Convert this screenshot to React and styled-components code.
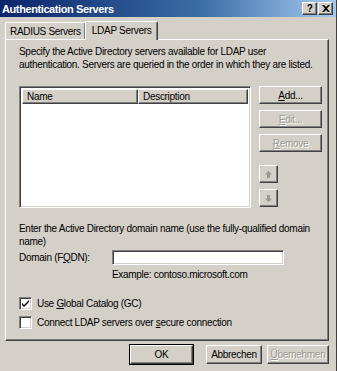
import React from 'react';
import styled, { createGlobalStyle, css } from 'styled-components';

const Global = createGlobalStyle`
	html, body {
		margin: 0;
		padding: 0;
		background: #d4d0c8;
	}
	* {
		box-sizing: border-box;
	}
`;

const face = '#d4d0c8';

const raised = css`
	border: 1px solid;
	border-color: #ffffff #404040 #404040 #ffffff;
	box-shadow: inset -1px -1px 0 #808080, inset 1px 1px 0 ${face};
`;

const sunken = css`
	border: 1px solid;
	border-color: #808080 #ffffff #ffffff #808080;
	box-shadow: inset 1px 1px 0 #404040, inset -1px -1px 0 ${face};
`;

const Window = styled.div`
	width: 337px;
	height: 371px;
	background: ${face};
	font-family: 'Liberation Sans', Arial, sans-serif;
	font-size: 10px;
	letter-spacing: -0.3px;
	color: #000;
	display: flex;
	flex-direction: column;
	border-right: 1px solid #404040;
	overflow: hidden;
	white-space: nowrap;
`;

const TitleBar = styled.div`
	height: 17px;
	display: flex;
	align-items: center;
	justify-content: space-between;
	padding: 0 3px 0 2px;
	background: linear-gradient(to right, #0a246a, #3a6ea5 60%, #a6caf0);
	color: #fff;
	font-weight: bold;
	font-size: 11px;
	letter-spacing: -0.4px;
`;

const TitleButtons = styled.div`
	display: flex;
	gap: 1px;
`;

const CapButton = styled.div`
	width: 15px;
	height: 13px;
	background: ${face};
	${raised};
	display: flex;
	align-items: center;
	justify-content: center;
	color: #000;
	font-size: 10px;
	font-weight: bold;
	line-height: 1;
`;

const Body = styled.div`
	flex: 1;
	display: flex;
	flex-direction: column;
	padding: 3px 7px 0 5px;
`;

const TabStrip = styled.div`
	display: flex;
	align-items: flex-end;
	height: 19px;
	position: relative;
	z-index: 1;
`;

const Tab = styled.div`
	height: ${(p) => (p.$active ? '19px' : '17px')};
	padding: 0 ${(p) => (p.$active ? '6px' : '4px')};
	margin-left: ${(p) => (p.$active ? '-1px' : '0')};
	display: flex;
	align-items: center;
	background: ${face};
	border-top: 1px solid #fff;
	border-left: 1px solid #fff;
	border-right: 1px solid #404040;
	box-shadow: inset -1px 0 0 #808080;
	border-radius: 2px 2px 0 0;
	margin-bottom: ${(p) => (p.$active ? '-1px' : '0')};
	${(p) => p.$active && 'padding-bottom: 1px;'}
`;

const Panel = styled.div`
	height: 302px;
	border: 1px solid;
	border-color: #fff #404040 #404040 #fff;
	box-shadow: inset -1px -1px 0 #808080;
	padding: 5px 6px 0 13px;
	display: flex;
	flex-direction: column;
`;

const Text = styled.div`
	line-height: 13px;
	margin-top: ${(p) => p.$mt || 0}px;
`;

const ListRow = styled.div`
	margin-top: 15px;
	display: flex;
	gap: 8px;
`;

const List = styled.div`
	width: 233px;
	height: 122px;
	background: #fff;
	${sunken};
	padding: 2px;
`;

const ListHeader = styled.div`
	display: grid;
	grid-template-columns: 116px 1fr;
	height: 15px;
`;

const HeaderCell = styled.div`
	background: ${face};
	${raised};
	padding-left: 4px;
	display: flex;
	align-items: center;
	line-height: 1;
`;

const ButtonCol = styled.div`
	display: flex;
	flex-direction: column;
	gap: 6px;
`;

const Button = styled.div`
	width: ${(p) => p.$w || 63}px;
	height: ${(p) => p.$h || 18}px;
	margin-right: ${(p) => p.$mr || 0}px;
	background: ${face};
	${raised};
	${(p) =>
		p.$default &&
		css`
			outline: 1px solid #000;
			outline-offset: 0;
		`}
	display: flex;
	align-items: center;
	justify-content: center;
	color: ${(p) => (p.$disabled ? '#9a9890' : '#000')};
	text-shadow: ${(p) => (p.$disabled ? '1px 1px 0 #fff' : 'none')};
`;

const ArrowGroup = styled.div`
	margin-top: 7px;
	display: flex;
	flex-direction: column;
	gap: 6px;
`;

const DomainRow = styled.div`
	display: flex;
	align-items: center;
	margin-top: 2px;
`;

const Label = styled.div`
	width: 93px;
`;

const Input = styled.div`
	width: 172px;
	height: 15px;
	background: #fff;
	${sunken};
`;

const Hint = styled.div`
	margin: 3px 0 0 93px;
	line-height: 13px;
`;

const CheckRow = styled.div`
	display: flex;
	align-items: center;
	gap: 5px;
	height: 13px;
	margin-top: ${(p) => p.$mt}px;
`;

const Box = styled.div`
	width: 13px;
	height: 13px;
	background: #fff;
	${sunken};
	display: flex;
	align-items: center;
	justify-content: center;
`;

const Footer = styled.div`
	display: flex;
	justify-content: flex-end;
	gap: 5px;
	padding: 4px 0 0 0;
`;

function Arrow({ up }) {
	return (
		<svg width="7" height="7" viewBox="0 0 7 7">
			<path
				d={up ? 'M3.5 0 L7 3.5 L5 3.5 L5 7 L2 7 L2 3.5 L0 3.5 Z' : 'M3.5 7 L7 3.5 L5 3.5 L5 0 L2 0 L2 3.5 L0 3.5 Z'}
				fill="#9a9890"
			/>
		</svg>
	);
}

function Check() {
	return (
		<svg width="9" height="9" viewBox="0 0 9 9">
			<path d="M1 4 L3 6 L8 1 L8 3 L3 8 L1 6 Z" fill="#000" />
		</svg>
	);
}

export default function App() {
	return (
		<Window>
			<Global />
			<TitleBar>
				<span>Authentication Servers</span>
				<TitleButtons>
					<CapButton>?</CapButton>
					<CapButton>
						<svg width="8" height="7" viewBox="0 0 8 7">
							<path d="M0 0 L2 0 L4 2 L6 0 L8 0 L5 3.5 L8 7 L6 7 L4 5 L2 7 L0 7 L3 3.5 Z" fill="#000" />
						</svg>
					</CapButton>
				</TitleButtons>
			</TitleBar>
			<Body>
				<TabStrip>
					<Tab>RADIUS Servers</Tab>
					<Tab $active>LDAP Servers</Tab>
				</TabStrip>
				<Panel>
					<Text>Specify the Active Directory servers available for LDAP user</Text>
					<Text>authentication. Servers are queried in the order in which they are listed.</Text>
					<ListRow>
						<List>
							<ListHeader>
								<HeaderCell>Name</HeaderCell>
								<HeaderCell>Description</HeaderCell>
							</ListHeader>
						</List>
						<ButtonCol>
							<Button>
								<span>
									<u>A</u>dd...
								</span>
							</Button>
							<Button $disabled>
								<span>
									<u>E</u>dit...
								</span>
							</Button>
							<Button $disabled>
								<span>
									<u>R</u>emove
								</span>
							</Button>
							<ArrowGroup>
								<Button $w={19} $h={18}>
									<Arrow up />
								</Button>
								<Button $w={19} $h={18}>
									<Arrow />
								</Button>
							</ArrowGroup>
						</ButtonCol>
					</ListRow>
					<Text $mt={14}>Enter the Active Directory domain name (use the fully-qualified domain</Text>
					<Text>name)</Text>
					<DomainRow>
						<Label>
							Domain (F<u>Q</u>DN):
						</Label>
						<Input />
					</DomainRow>
					<Hint>Example: contoso.microsoft.com</Hint>
					<CheckRow $mt={16}>
						<Box>
							<Check />
						</Box>
						<span>
							Use <u>G</u>lobal Catalog (GC)
						</span>
					</CheckRow>
					<CheckRow $mt={6}>
						<Box />
						<span>
							Connect LDAP servers over <u>s</u>ecure connection
						</span>
					</CheckRow>
				</Panel>
				<Footer>
					<Button $default $w={63} $h={19} $mr={8}>
						OK
					</Button>
					<Button $w={56} $h={19}>
						Abbrechen
					</Button>
					<Button $disabled $w={62} $h={19}>
						<span>
							<u>Ü</u>bernehmen
						</span>
					</Button>
				</Footer>
			</Body>
		</Window>
	);
}
